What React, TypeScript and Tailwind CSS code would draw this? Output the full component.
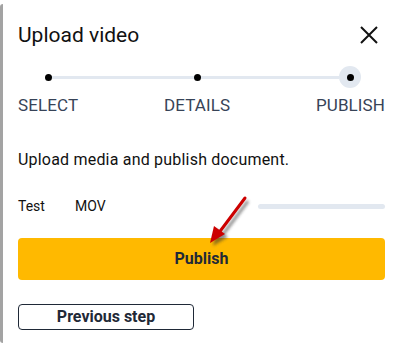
import React from "react"

const Step = ({ label, first, last, active } : { label : string, first? : boolean, last? : boolean, active? : boolean }) => {
    return (
        <div className="flex flex-col">
            <div className="flex items-center h-[22px]">
                <div className={`flex-1 h-[3px] ${first ? "" : "bg-[#e2e8f0]"}`}></div>
                <div className={`flex items-center justify-center rounded-full ${active ? "w-[22px] h-[22px] bg-[#e2e8f0]" : "w-[7px] h-[7px]"}`}>
                    <div className="w-[7px] h-[7px] rounded-full bg-black"></div>
                </div>
                <div className={`flex-1 h-[3px] ${last ? "" : "bg-[#e2e8f0]"}`}></div>
            </div>
            <div className="mt-[7px] text-[17px] leading-[20px] text-[#374357] tracking-[0.1px]">{label}</div>
        </div>
    )
}

const Arrow = () => (
    <svg className="absolute left-[200px] top-[190px]" width="60" height="64" viewBox="0 0 60 64">
        <defs>
            <filter id="sh" x="-50%" y="-50%" width="200%" height="200%">
                <feGaussianBlur stdDeviation="1.6" />
            </filter>
        </defs>
        <g opacity="0.55" filter="url(#sh)" transform="translate(3,3)">
            <line x1="45" y1="8" x2="18" y2="44" stroke="#333" strokeWidth="3" />
            <polygon points="10,53 14,36 25,44" fill="#333" />
        </g>
        <line x1="45" y1="8" x2="18" y2="44" stroke="#cc0000" strokeWidth="3" strokeLinecap="round" />
        <polygon points="10,53 14,36 25,44" fill="#cc0000" />
    </svg>
)

export default function App() {
    return (
        <div className="relative w-[399px] h-[346px] bg-white flex font-['Roboto',sans-serif] overflow-hidden">
            <div className="w-[3px] mt-[4px] mb-[3px] bg-[#a3a3a3] rounded-tl-[3px] rounded-bl-[3px]"></div>
            <div className="flex-1 pl-[15px] pr-[14px] flex flex-col">
                <div className="flex items-center justify-between h-[30px] mt-[20px]">
                    <div className="text-[21px] text-[#111] leading-[24px]">Upload video</div>
                    <svg width="20" height="20" viewBox="0 0 20 20" className="mr-[6px]">
                        <path d="M2 2 L18 18 M18 2 L2 18" stroke="#111" strokeWidth="2" />
                    </svg>
                </div>
                <div className="grid grid-cols-[auto_1fr_auto_1fr_auto] mt-[16px]">
                    <Step label="SELECT" first />
                    <div className="h-[22px] flex items-center"><div className="w-full h-[3px] bg-[#e2e8f0]"></div></div>
                    <Step label="DETAILS" />
                    <div className="h-[22px] flex items-center"><div className="w-full h-[3px] bg-[#e2e8f0]"></div></div>
                    <Step label="PUBLISH" last active />
                </div>
                <div className="mt-[35px] text-[16px] leading-[20px] text-[#111] tracking-[0.2px]">Upload media and publish document.</div>
                <div className="mt-[26px] flex items-center h-[20px]">
                    <div className="w-[57px] text-[14px] text-[#111]">Test</div>
                    <div className="w-[183px] text-[14px] text-[#111]">MOV</div>
                    <div className="flex-1 h-[5px] rounded-full bg-[#e2e8f0]"></div>
                </div>
                <button className="mt-[22px] h-[42px] w-full rounded-[4px] bg-[#ffb900] text-[16px] font-bold text-[#1f2937]">Publish</button>
                <button className="mt-[24px] h-[26px] w-[176px] rounded-[4px] border border-[#1f2937] text-[16px] font-bold text-[#1f2937] leading-[20px]">Previous step</button>
            </div>
            <Arrow />
        </div>
    )
}
